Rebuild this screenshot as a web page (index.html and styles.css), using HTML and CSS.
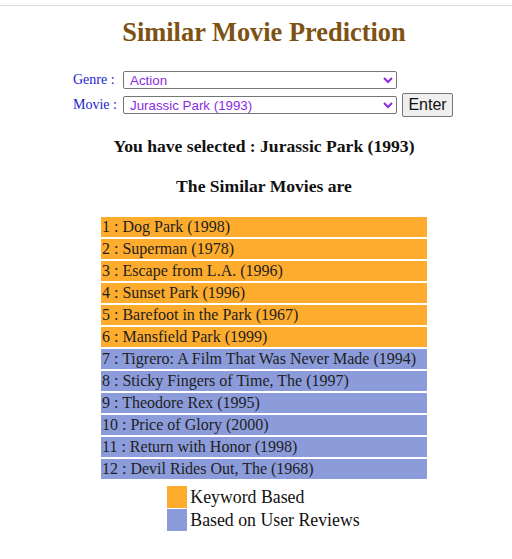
FILE: index.html
```html
<!DOCTYPE html>
<html>
<head>
<meta charset="utf-8">
<link rel="stylesheet" href="styles.css">
</head>
<body>
<div class="topline"></div>
<div class="page">
  <h1 class="title">Similar Movie Prediction</h1>
  <form class="picker">
    <label class="lbl" for="genre">Genre :</label>
    <select id="genre" class="sel"><option>Action</option></select>
    <span></span>
    <label class="lbl" for="movie">Movie :</label>
    <select id="movie" class="sel"><option>Jurassic Park (1993)</option></select>
    <button type="button" class="btn">Enter</button>
  </form>
  <h3 class="sub first">You have selected : Jurassic Park (1993)</h3>
  <h3 class="sub">The Similar Movies are</h3>
  <div class="results">
    <div class="row kw">1 : Dog Park (1998)</div>
    <div class="row kw">2 : Superman (1978)</div>
    <div class="row kw">3 : Escape from L.A. (1996)</div>
    <div class="row kw">4 : Sunset Park (1996)</div>
    <div class="row kw">5 : Barefoot in the Park (1967)</div>
    <div class="row kw">6 : Mansfield Park (1999)</div>
    <div class="row ur">7 : Tigrero: A Film That Was Never Made (1994)</div>
    <div class="row ur">8 : Sticky Fingers of Time, The (1997)</div>
    <div class="row ur">9 : Theodore Rex (1995)</div>
    <div class="row ur">10 : Price of Glory (2000)</div>
    <div class="row ur">11 : Return with Honor (1998)</div>
    <div class="row ur">12 : Devil Rides Out, The (1968)</div>
  </div>
  <div class="legend">
    <span class="swatch kw"></span><span class="ltext">Keyword Based</span>
    <span class="swatch ur"></span><span class="ltext">Based on User Reviews</span>
  </div>
</div>
</body>
</html>
```
FILE: styles.css
```css
html, body {
  margin: 0;
  padding: 0;
  background: #fff;
}
body {
  font-family: "Liberation Serif", "Times New Roman", serif;
  color: #111;
}
.topline {
  margin-top: 5px;
  height: 1px;
  background: #dcdcdc;
}
.page {
  padding-left: 16px;
  display: flex;
  flex-direction: column;
  align-items: center;
}
.title {
  margin: 11px 0 0;
  font-size: 26.4px;
  line-height: 30px;
  font-weight: bold;
  color: #7d5212;
}
.picker {
  margin-top: 24px;
  display: grid;
  grid-template-columns: 50px 274px 56px;
  row-gap: 4px;
  align-items: center;
  margin-right: 2px;
}
.lbl {
  font-size: 14px;
  color: #1c1ccc;
  white-space: nowrap;
}
.sel {
  height: 18px;
  margin: 0;
  padding: 0 2px;
  font-family: "Liberation Sans", Arial, sans-serif;
  font-size: 13.33px;
  color: #8a2be2;
  background: #fff;
  border: 1px solid #767676;
  border-radius: 2px;
}
.btn {
  justify-self: end;
  width: 51px;
  height: 24px;
  margin: 0;
  padding: 0;
  font-family: "Liberation Sans", Arial, sans-serif;
  font-size: 16px;
  color: #111;
  background: #efefef;
  border: 1px solid #767676;
  border-radius: 2px;
}
.sub {
  margin: 20px 0 0;
  font-size: 17.6px;
  line-height: 20px;
  font-weight: bold;
  color: #111;
}
.sub.first {
  margin-top: 19px;
}
.results {
  margin-top: 21px;
  width: 326px;
  display: flex;
  flex-direction: column;
  gap: 2px;
}
.row {
  height: 20px;
  line-height: 20px;
  padding-left: 1px;
  font-size: 16px;
  color: #1e1e1e;
  white-space: nowrap;
}
.kw {
  background: #fdac2e;
}
.ur {
  background: #8c9cda;
}
.legend {
  margin-top: 7px;
  display: grid;
  grid-template-columns: 20px auto;
  column-gap: 3px;
  row-gap: 1px;
  margin-right: 1px;
}
.swatch {
  height: 22px;
}
.ltext {
  font-size: 17.8px;
  line-height: 22px;
  color: #111;
  white-space: nowrap;
}
```
